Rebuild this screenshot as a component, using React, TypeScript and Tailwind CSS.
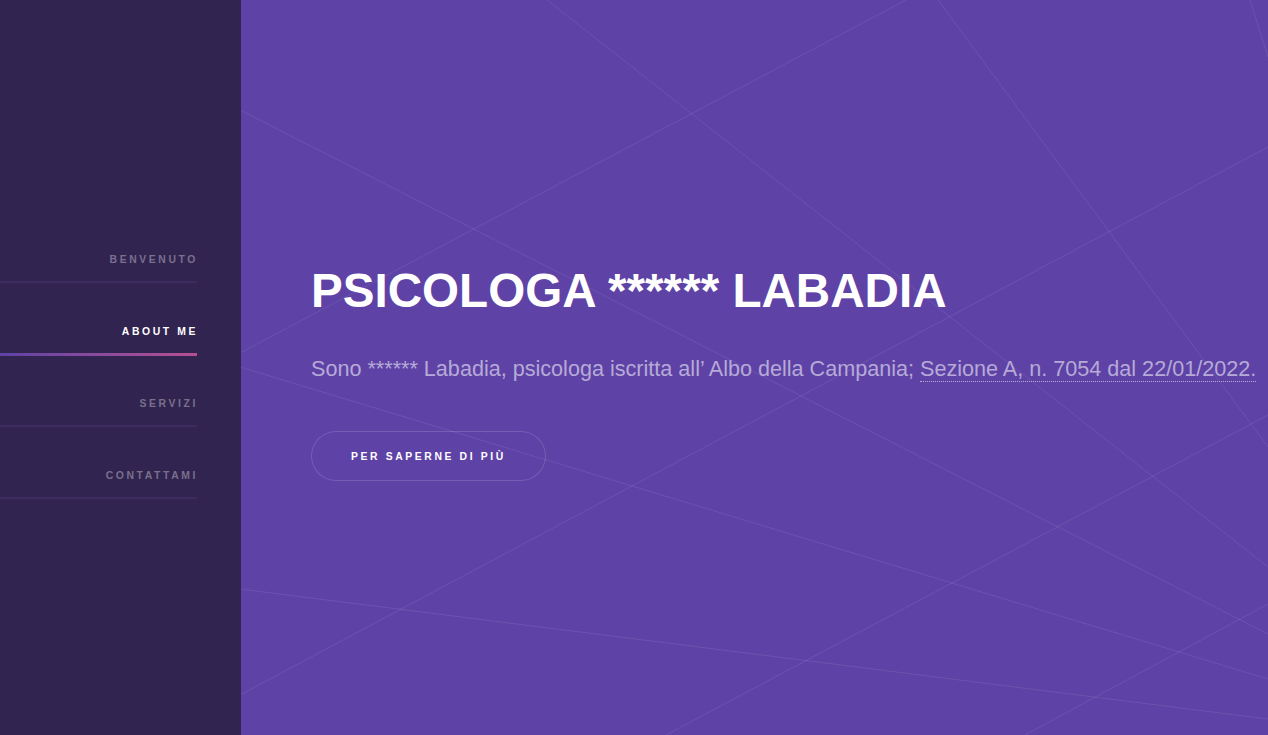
import React from "react"

const navItems = [
  { label: "Benvenuto", active: false },
  { label: "About me", active: true },
  { label: "Servizi", active: false },
  { label: "Contattami", active: false },
]

// background line pattern of the intro section (main area coords)
const lines: [number, number, number, number][] = [
  [-1, 110, 1027, 634],
  [-1, 353, 665, 0],
  [306, 0, 1027, 567],
  [697, 0, 1027, 447],
  [1009, 0, 1027, 57],
  [-1, 695, 1027, 147],
  [-1, 367, 1027, 679],
  [-1, 589, 1027, 719],
  [425, 735, 1027, 415],
  [784, 735, 1027, 604],
]

function Sidebar() {
  return (
    <aside className="w-[241px] shrink-0 bg-[#312450] pr-[44px] pt-[211px]">
      <nav>
        <ul>
          {navItems.map((item) => (
            <li key={item.label}>
              <a
                href="#"
                className={
                  "block pt-[44px] pb-[16px] text-right text-[10.4px] font-bold uppercase leading-[10px] tracking-[0.25em] " +
                  (item.active ? "text-white" : "text-[#79708d]")
                }
              >
                <span className="mr-[-1px]">{item.label}</span>
              </a>
              {item.active ? (
                <div className="h-[3px] mb-[-1px] bg-gradient-to-r from-[#5e42a6] to-[#b74e91]" />
              ) : (
                <div className="h-[2px] bg-[#3b2b62]" />
              )}
            </li>
          ))}
        </ul>
      </nav>
    </aside>
  )
}

function Intro() {
  return (
    <section className="relative flex-1 overflow-hidden bg-[#5e42a6]">
      <svg
        className="absolute inset-0 h-full w-full"
        viewBox="0 0 1027 735"
        preserveAspectRatio="none"
      >
        {lines.map(([x1, y1, x2, y2], i) => (
          <line key={i} x1={x1} y1={y1} x2={x2} y2={y2} stroke="#ffffff" strokeOpacity="0.09" strokeWidth="1" />
        ))}
      </svg>

      <div className="relative pl-[70px] pt-[260px]">
        <h1 className="text-[47.6px] font-bold leading-[1.3] text-white">PSICOLOGA ****** LABADIA</h1>
        <p className="mt-[29px] whitespace-nowrap text-[21.6px] leading-[1.65] text-[#b6aad7]">
          Sono ****** Labadia, psicologa iscritta all’ Albo della Campania;{" "}
          <a href="#" className="border-b border-dotted border-[#b6aad7]">
            Sezione A, n. 7054 dal 22/01/2022.
          </a>
        </p>
        <a
          href="#"
          className="mt-[45px] inline-flex h-[50px] items-center rounded-full px-[40px] text-[10.4px] font-bold uppercase tracking-[0.25em] text-white shadow-[inset_0_0_0_1px_rgba(255,255,255,0.15)]"
        >
          Per saperne di più
        </a>
      </div>
    </section>
  )
}

export default function App() {
  return (
    <div className="flex h-[735px] w-full overflow-hidden font-['Liberation_Sans',Arial,sans-serif]">
      <Sidebar />
      <Intro />
    </div>
  )
}
